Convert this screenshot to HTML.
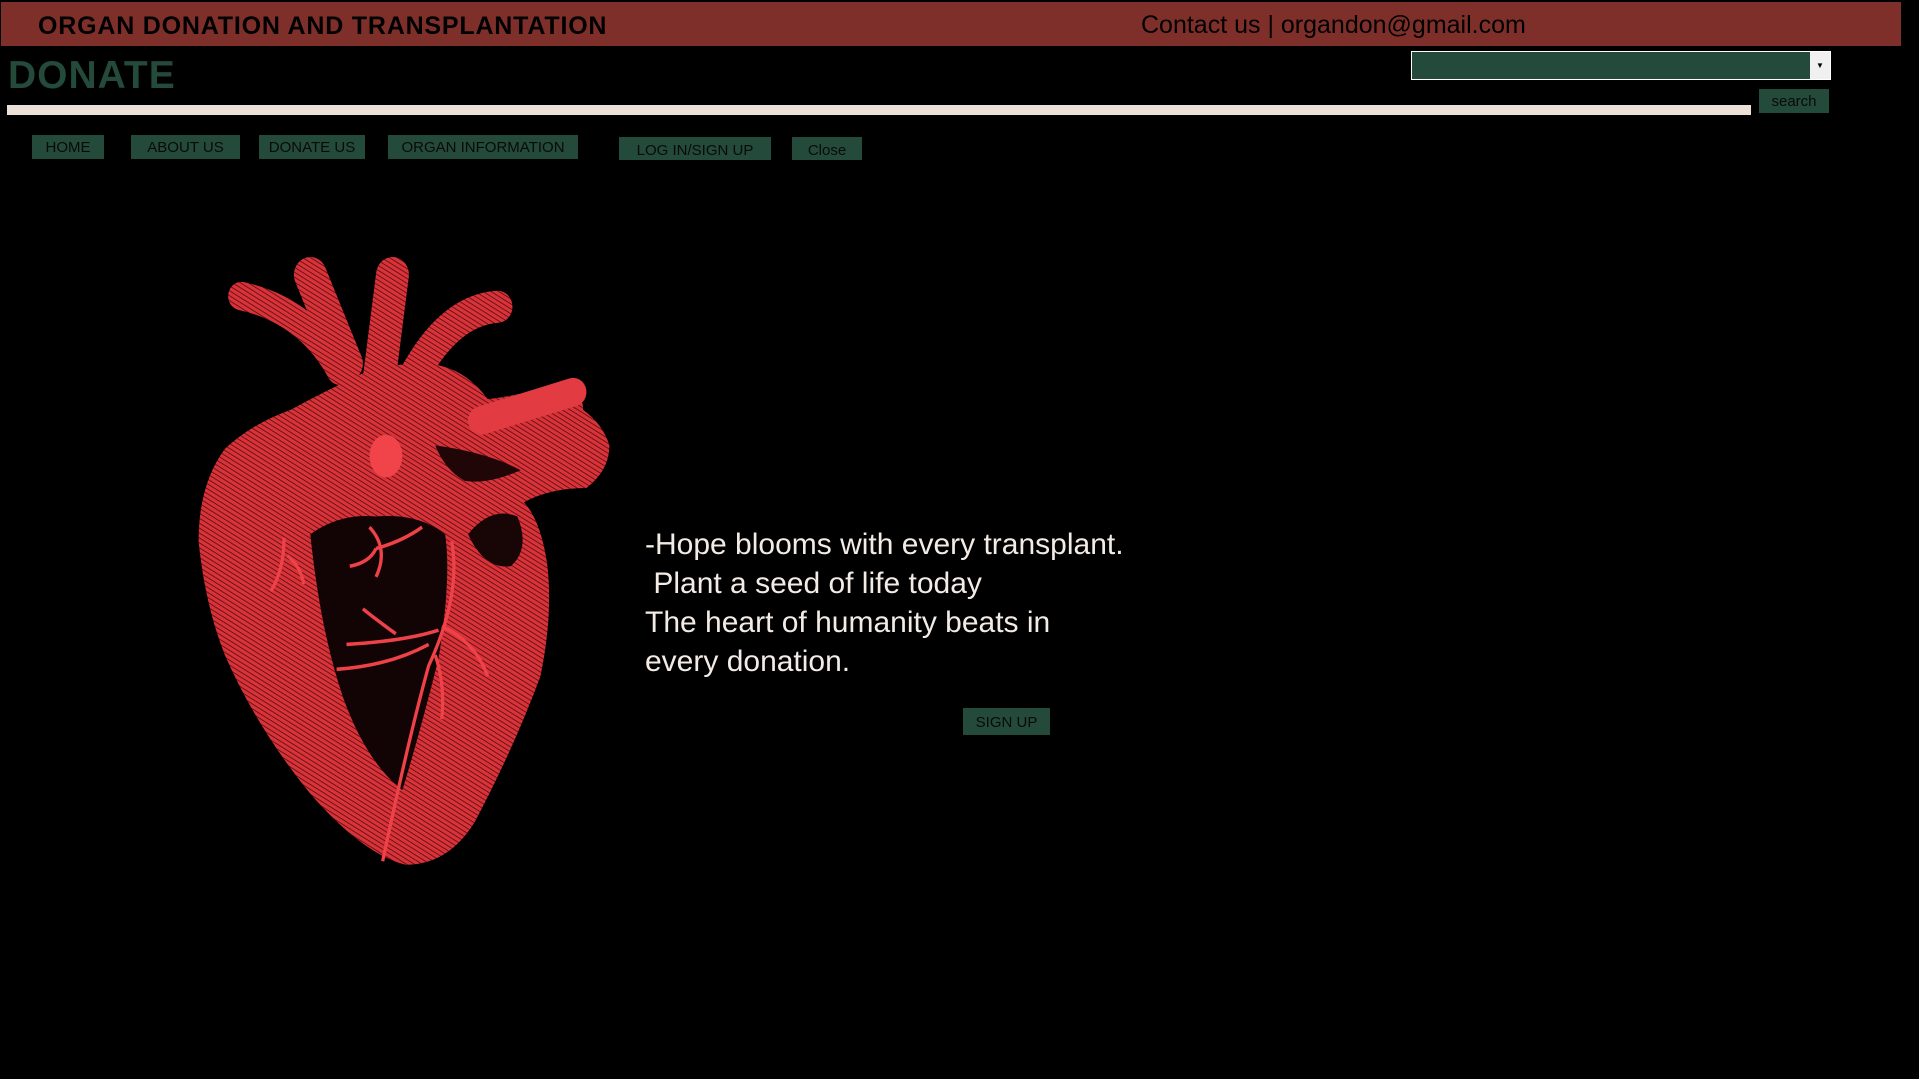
<!DOCTYPE html>
<html><head><meta charset="utf-8"><style>
*{margin:0;padding:0;box-sizing:border-box}
body{width:1919px;height:1079px;background:#000;position:relative;overflow:hidden;font-family:"Liberation Sans",sans-serif}
.hdr{position:absolute;left:1px;top:2px;width:1900px;height:44px;background:#7f2f2a}
.t1{position:absolute;left:37px;top:10px;font-size:25px;font-weight:bold;color:#000;letter-spacing:0.8px}
.t2{position:absolute;left:1140px;top:9px;font-size:25px;color:#000}
.donate{position:absolute;left:8px;top:54px;font-size:39px;font-weight:bold;color:#234a3a;letter-spacing:1px}
.bar{position:absolute;left:7px;top:105px;width:1744px;height:10px;background:#ede0d6}
.sel{position:absolute;left:1411px;top:51px;width:420px;height:29px;border:1px solid #fff;background:#234a3a}
.sel .a{position:absolute;right:0;top:0;width:20px;height:27px;background:#f0f0f0;font-size:8px;text-align:center;line-height:27px;color:#000}
.btn{position:absolute;background:#234a3a;color:#0a0a0a;font-size:15px;text-align:center;letter-spacing:0}
.q{position:absolute;left:645px;top:525px;font-size:30px;line-height:39px;color:#f3ebe5;white-space:pre}
</style></head><body>
<div class="hdr"><div class="t1">ORGAN DONATION AND TRANSPLANTATION</div><div class="t2">Contact us&nbsp;|&nbsp;organdon@gmail.com</div></div>
<div class="donate">DONATE</div>
<div class="bar"></div>
<div class="sel"><div class="a">▼</div></div>
<div class="btn" style="left:1759px;top:89px;width:70px;height:24px;line-height:26px">search</div>
<div class="btn" style="left:32px;top:135px;width:72px;height:24px;line-height:26px">HOME</div>
<div class="btn" style="left:131px;top:135px;width:109px;height:24px;line-height:26px">ABOUT US</div>
<div class="btn" style="left:259px;top:135px;width:106px;height:24px;line-height:26px">DONATE US</div>
<div class="btn" style="left:388px;top:135px;width:190px;height:24px;line-height:26px">ORGAN INFORMATION</div>
<div class="btn" style="left:619px;top:137px;width:152px;height:23px;line-height:28px">LOG IN/SIGN UP</div>
<div class="btn" style="left:792px;top:137px;width:70px;height:23px;line-height:28px">Close</div>
<div class="btn" style="left:963px;top:708px;width:87px;height:27px;line-height:29px">SIGN UP</div>
<div class="q">-Hope blooms with every transplant.
 Plant a seed of life today
The heart of humanity beats in
every donation.</div>
<svg style="position:absolute;left:192px;top:257px" width="424" height="622" viewBox="0 0 1290 1750" preserveAspectRatio="none">
<defs><pattern id="h" width="12" height="12" patternUnits="userSpaceOnUse" patternTransform="rotate(30)"><rect width="12" height="12" fill="#d93239"/><rect width="12" height="2.5" fill="#5a1014"/></pattern></defs>
<g fill="none" stroke="url(#h)" stroke-linecap="round">
<path d="M150 110 Q350 150 450 320" stroke-width="80"/>
<path d="M360 50 L470 300" stroke-width="100"/>
<path d="M610 50 L570 340" stroke-width="100"/>
<path d="M930 140 Q760 150 640 400" stroke-width="90"/>
</g>
<path d="M300 430 Q180 470 100 540 Q20 640 20 800 Q40 980 100 1120 Q200 1330 360 1510 Q520 1680 650 1710 Q780 1710 860 1590 Q980 1380 1060 1180 Q1100 1000 1080 860 Q1060 740 1010 690 Q1090 650 1200 650 Q1270 600 1270 530 Q1250 470 1190 430 Q1190 380 1140 350 Q1000 390 900 400 Q820 300 700 300 Q560 300 470 350 Q400 380 300 430Z" fill="url(#h)"/>
<path d="M1160 380 L880 460" stroke="#e23c42" stroke-width="80" stroke-linecap="round"/>
<path d="M360 780 Q450 720 560 730 Q690 720 770 780 Q790 900 750 1130 Q690 1350 640 1500 Q530 1420 460 1240 Q390 1050 360 780Z" fill="#120404"/>
<path d="M840 780 Q910 700 990 730 Q1030 820 970 870 Q890 880 840 780Z" fill="#180505"/>
<path d="M740 530 Q900 550 1000 600 Q900 640 830 630 Q770 600 740 530Z" fill="#200606"/>
<ellipse cx="590" cy="560" rx="50" ry="60" fill="#f0434a"/>
<g fill="none" stroke="#ef4148" stroke-width="10">
<path d="M790 800 Q820 950 720 1150 Q660 1350 580 1700"/>
<path d="M540 760 Q600 820 560 900 M560 820 Q640 800 700 760 M480 870 Q540 860 560 820"/>
<path d="M750 1050 Q650 1080 470 1090 M620 1060 Q560 1020 520 990 M720 1090 Q600 1150 440 1160"/>
<path d="M760 1040 Q860 1080 900 1180 M740 1120 Q770 1200 760 1300"/>
<path d="M280 790 Q280 880 240 940 M290 840 Q330 870 340 920"/>
</g>
</svg>
</body></html>
